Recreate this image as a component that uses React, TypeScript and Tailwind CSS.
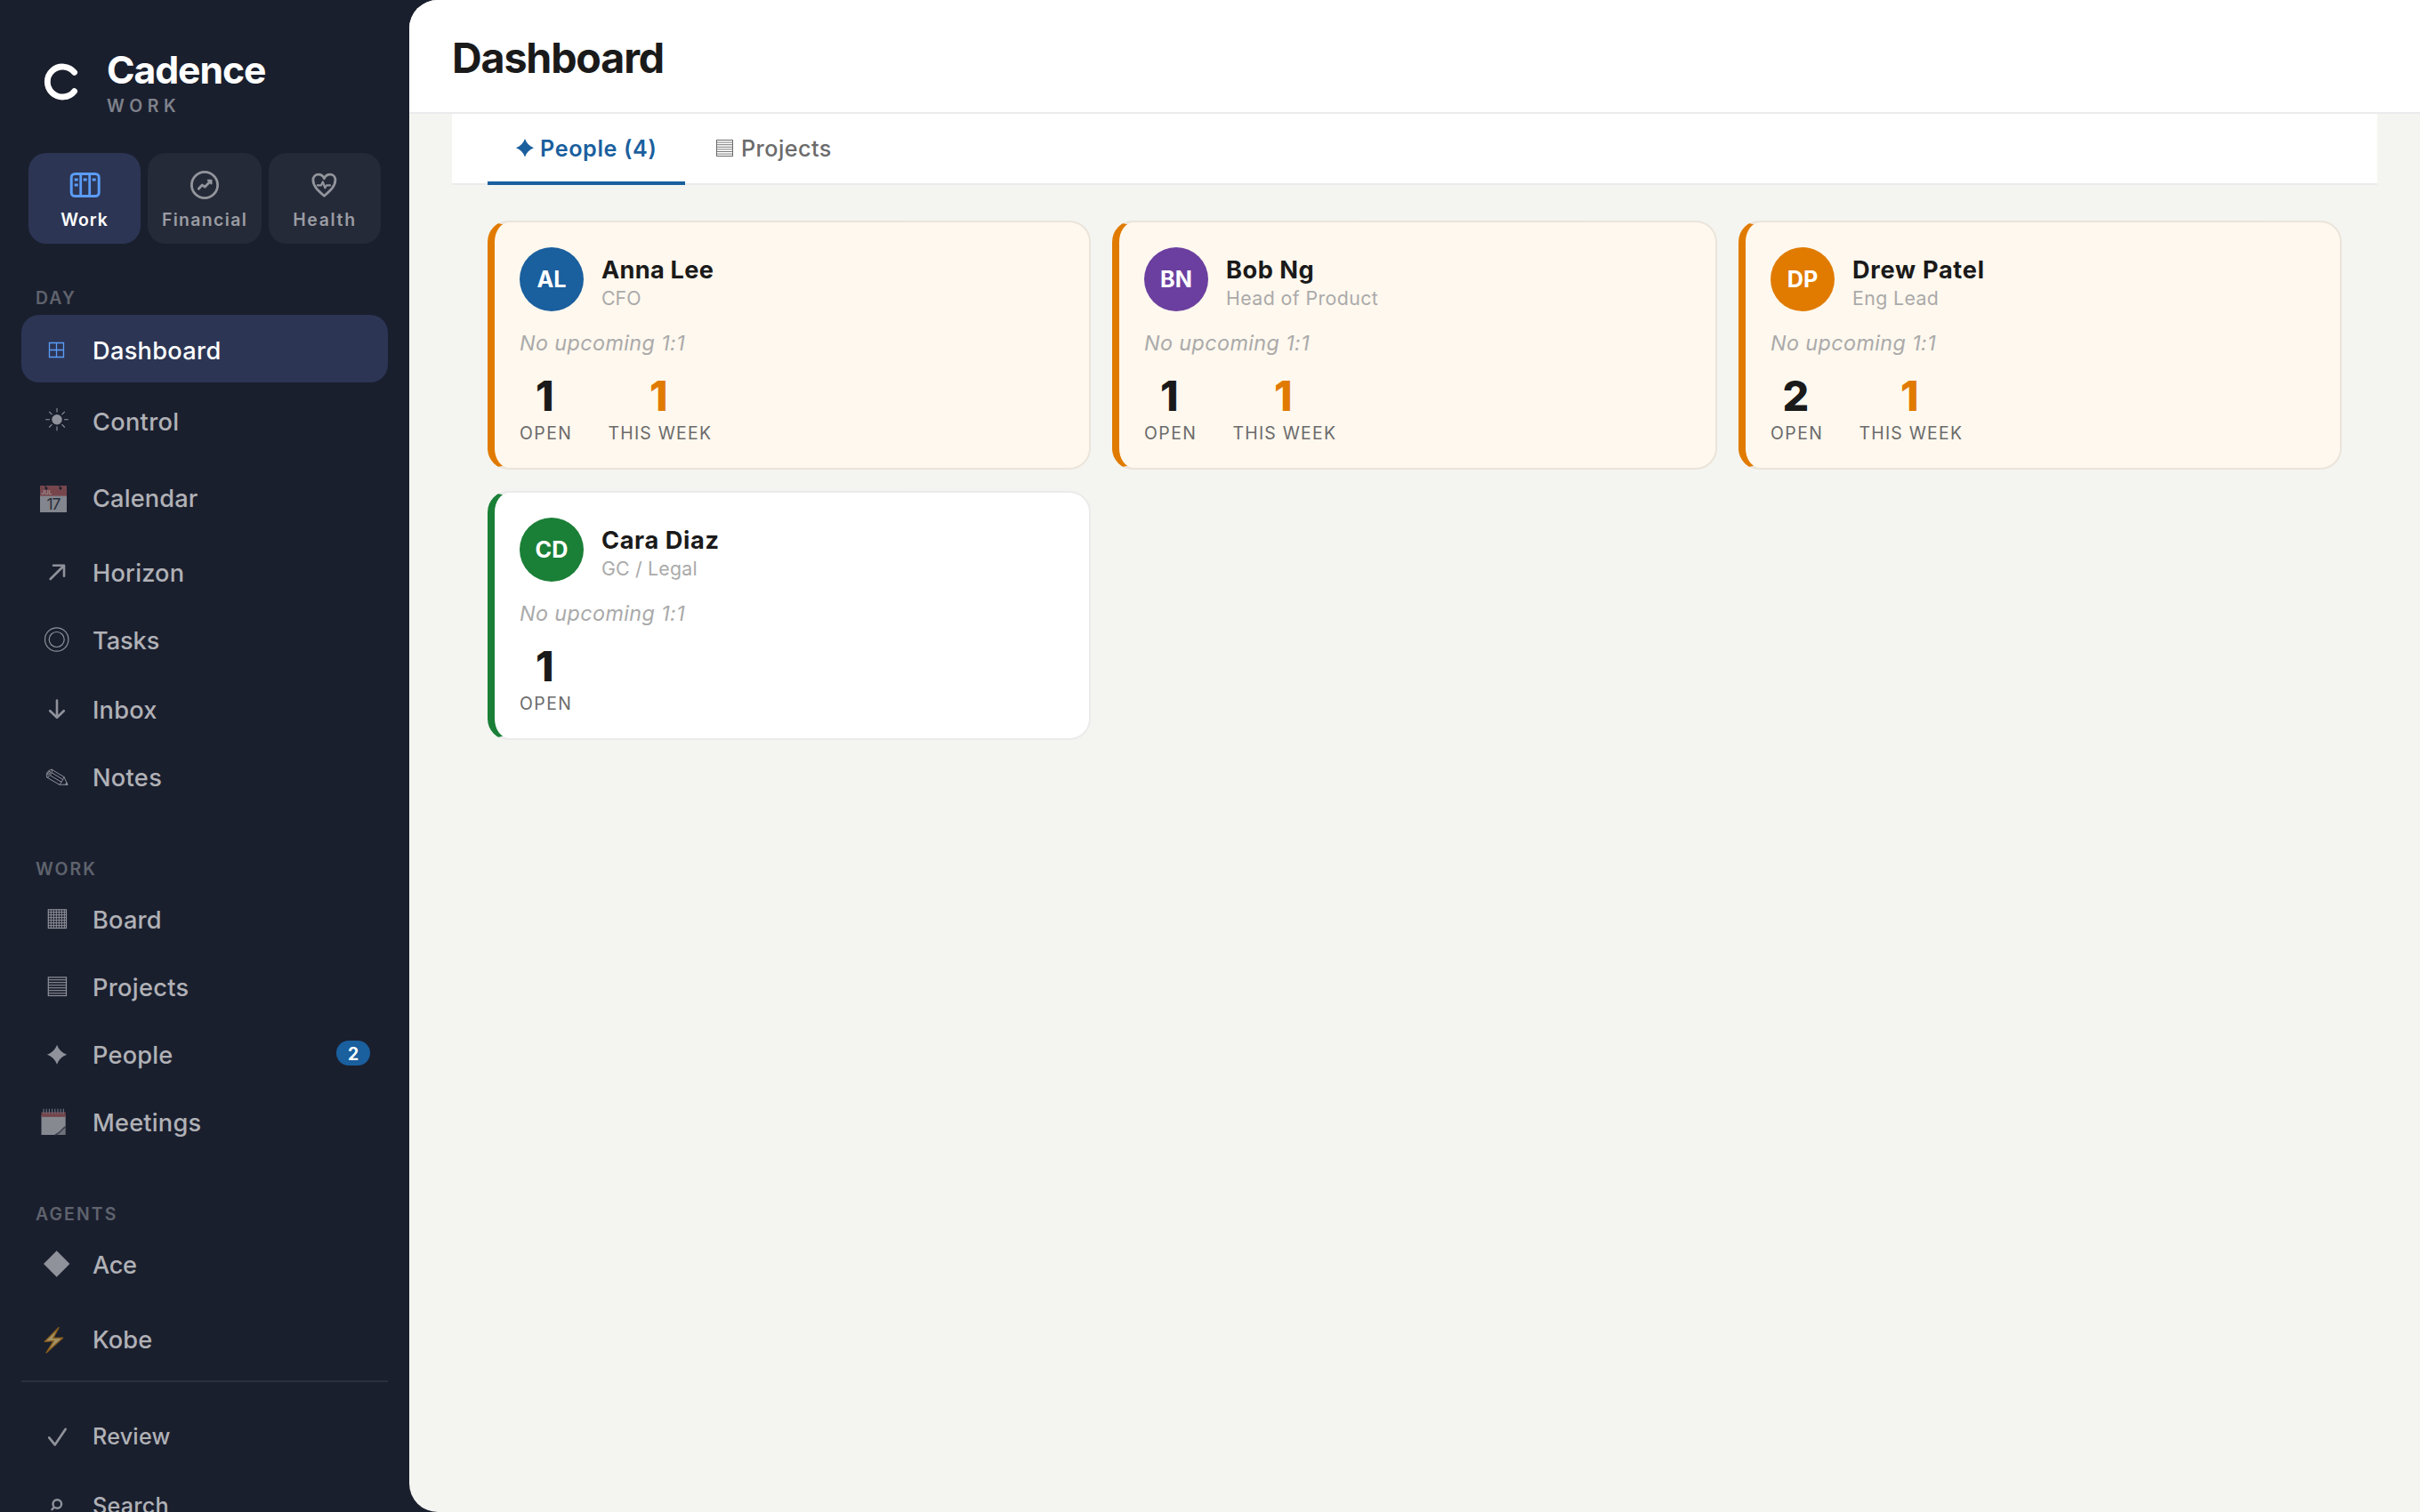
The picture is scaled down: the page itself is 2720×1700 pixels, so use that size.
import type { ReactNode } from "react";

type NavItem = {
  label: string;
  icon: ReactNode;
  row?: string;
  text?: string;
  active?: boolean;
  badge?: number;
};

/* Sidebar glyphs, all on a 48px box */

function Glyph({ children }: { children: ReactNode }) {
  return (
    <svg
      viewBox="0 0 48 48"
      className="size-12 shrink-0"
      fill="none"
      stroke="currentColor"
      strokeLinecap="round"
      strokeLinejoin="round"
    >
      {children}
    </svg>
  );
}

const boardLines = [17.3, 20.3, 23.3, 26.3, 29.3, 32.3];

const dayItems: NavItem[] = [
  {
    label: "Dashboard",
    active: true,
    row: "mt-[2px]",
    icon: (
      <Glyph>
        <path d="M15.5 17.5h16v16h-16zM23.5 17.5v16M15.5 25.5h16" strokeWidth="1.3" strokeLinejoin="miter" />
      </Glyph>
    ),
  },
  {
    label: "Control",
    row: "mt-1",
    icon: (
      <Glyph>
        <circle cx="24" cy="23.7" r="5.7" fill="currentColor" stroke="none" />
        <path
          d="M24 11v4.6M24 31.6v4.6M11.2 23.7h4.8M32 23.7h4.8M15.2 14.8l3.3 3.4M29.5 29.2l3.3 3.3M32.8 14.8l-3.3 3.4M18.5 29.2l-3.3 3.3"
          strokeWidth="1.1"
          strokeLinecap="butt"
        />
      </Glyph>
    ),
  },
  {
    label: "Calendar",
    row: "mt-[10px]",
    text: "tracking-[0.15px]",
    icon: (
      <Glyph>
        <rect x="5" y="12" width="30" height="30" fill="#83868e" stroke="none" />
        <rect x="5" y="12" width="30" height="11.6" fill="#76464c" stroke="none" />
        <circle cx="12" cy="15" r="1.5" fill="#1a1f2e" stroke="none" />
        <circle cx="28" cy="15" r="1.5" fill="#1a1f2e" stroke="none" />
        <path d="M10.5 12.2l1.5 2M26.5 12.2l1.5 2" stroke="#1a1f2e" strokeWidth="1" />
        <text x="6.3" y="22" fontSize="6.4" fontWeight="700" fill="#a08a90" stroke="none">
          JUL
        </text>
        <text x="20" y="39.3" fontSize="17.5" letterSpacing="-1" textAnchor="middle" fill="#2a2e3a" stroke="none">
          17
        </text>
      </Glyph>
    ),
  },
  {
    label: "Horizon",
    row: "mt-2",
    text: "tracking-[0.2px]",
    icon: (
      <Glyph>
        <path d="M16.7 33L31.8 18M20 17.8h12v12" strokeWidth="2.6" />
      </Glyph>
    ),
  },
  {
    label: "Tasks",
    text: "tracking-[-0.1px]",
    icon: (
      <Glyph>
        <circle cx="23.7" cy="25" r="13.2" strokeWidth="1.2" />
        <circle cx="23.7" cy="25" r="8.5" strokeWidth="1.2" />
      </Glyph>
    ),
  },
  {
    label: "Inbox",
    row: "mt-[2px]",
    text: "tracking-[0.2px]",
    icon: (
      <Glyph>
        <path d="M24 15.5V34.5M16.2 27.2l7.8 7.6 7.8-7.6" strokeWidth="2.6" />
      </Glyph>
    ),
  },
  {
    label: "Notes",
    icon: (
      <Glyph>
        <path
          d="M18.3 17.3L32 25.6 36 34.3 26.7 34.2 13 26.2C11.4 23.6 12.4 17.6 18.3 17.3ZM32 25.6C31 28 29.4 31.6 26.7 34.2M18.3 17.3C19.6 20.4 16 25.6 13 26.2M18.6 21L30.6 28.4M17 24.2L28.8 31.2"
          strokeWidth="1"
        />
        <ellipse cx="15" cy="21.2" rx="1" ry="2.2" transform="rotate(30 15 21.2)" strokeWidth="1" />
        <path d="M33.6 33.9l1.3-2.2 1.1 2.4z" fill="currentColor" strokeWidth="0.6" />
      </Glyph>
    ),
  },
];

const workItems: NavItem[] = [
  {
    label: "Board",
    text: "tracking-[0.2px]",
    icon: (
      <Glyph>
        <rect x="14.3" y="14.8" width="20.2" height="20.7" strokeWidth="1.2" strokeLinejoin="miter" />
        {boardLines.map((p) => (
          <path key={p} d={`M14.3 ${p + 0.4}h20.2M${p} 14.8v20.7`} strokeWidth="1" strokeLinecap="butt" />
        ))}
      </Glyph>
    ),
  },
  {
    label: "Projects",
    icon: (
      <Glyph>
        <rect x="14.3" y="14.8" width="20.2" height="20.7" strokeWidth="1.2" strokeLinejoin="miter" />
        {boardLines.map((p) => (
          <path key={p} d={`M14.3 ${p + 0.4}h20.2`} strokeWidth="1.1" strokeLinecap="butt" />
        ))}
      </Glyph>
    ),
  },
  {
    label: "People",
    text: "tracking-[0.2px]",
    badge: 2,
    icon: (
      <Glyph>
        <path
          d="M24 14.7C26 20 29.6 23.7 35.2 25.7 29.6 27.7 26 31.4 24 36.7 22 31.4 18.4 27.7 12.8 25.7 18.4 23.7 22 20 24 14.7Z"
          fill="currentColor"
          stroke="none"
        />
      </Glyph>
    ),
  },
  {
    label: "Meetings",
    text: "tracking-[0.2px]",
    icon: (
      <Glyph>
        <path d="M6.5 18h27.2v12.6L25.5 40H6.5z" fill="#868990" stroke="none" />
        <path d="M33.7 30.6C29 33 27.6 38.6 21.5 40h12.2z" fill="#6e7179" stroke="none" />
        <path d="M33.5 31C29.5 33 28 38 22.5 39.7" stroke="#3b3f4a" strokeWidth="1.5" />
        <rect x="6.5" y="14.4" width="27.2" height="5.4" fill="#74454b" stroke="none" />
        <path
          d="M9 11v5M12.2 11v5M15.4 11v5M18.6 11v5M21.8 11v5M25 11v5M28.2 11v5M31.4 11v5"
          stroke="#6d7480"
          strokeWidth="1.1"
        />
      </Glyph>
    ),
  },
];

const agentItems: NavItem[] = [
  {
    label: "Ace",
    text: "tracking-[-0.4px]",
    icon: (
      <Glyph>
        <path d="M23.7 10.3L38.4 25 23.7 39.7 9 25z" fill="currentColor" stroke="none" />
      </Glyph>
    ),
  },
  {
    label: "Kobe",
    row: "mt-2",
    text: "tracking-[0.1px]",
    icon: (
      <Glyph>
        <path
          d="M26 12.6L10.2 28.4 20.4 27.6 12 41 30.6 24.2 19.8 24.5z"
          fill="#a39163"
          stroke="#8a5d1c"
          strokeWidth="1.3"
        />
      </Glyph>
    ),
  },
];

const footerItems: NavItem[] = [
  {
    label: "Review",
    text: "tracking-[0.2px]",
    icon: (
      <Glyph>
        <path d="M15.2 28.4L21.7 36.4 33.7 18.8" strokeWidth="2.7" />
      </Glyph>
    ),
  },
  {
    label: "Search",
    row: "mt-[2px]",
    text: "tracking-[0.2px]",
    icon: (
      <Glyph>
        <circle cx="24.3" cy="25" r="4.8" strokeWidth="2.4" />
        <path d="M20.6 28.9L18.4 31.3" strokeWidth="2.4" />
      </Glyph>
    ),
  },
];

const people = [
  { initials: "AL", name: "Anna Lee", role: "CFO", open: 1, week: 1, avatar: "bg-[#1a5f9e]", nameCls: "tracking-[0.25px]", roleCls: "tracking-normal" },
  { initials: "BN", name: "Bob Ng", role: "Head of Product", open: 1, week: 1, avatar: "bg-[#6b3fa0]", nameCls: "tracking-[0.5px]", roleCls: "tracking-[0.42px]" },
  { initials: "DP", name: "Drew Patel", role: "Eng Lead", open: 2, week: 1, avatar: "bg-[#e07b00]", nameCls: "tracking-[0.7px]", roleCls: "tracking-[0.38px]" },
  { initials: "CD", name: "Cara Diaz", role: "GC / Legal", open: 1, week: 0, avatar: "bg-[#1a7f37]", nameCls: "tracking-[0.6px]", roleCls: "tracking-[0.2px]" },
];

function NavLabel({ children, className = "" }: { children: ReactNode; className?: string }) {
  return (
    <p className={`pl-10 pb-[5px] text-[19.4px] leading-6 font-semibold tracking-[2.1px] text-[#5f636d] ${className}`}>
      {children}
    </p>
  );
}

function NavRow({ item, small }: { item: NavItem; small?: boolean }) {
  return (
    <div
      className={`mx-6 flex h-[76px] shrink-0 items-center gap-4 rounded-[20px] pr-5 pl-4 ${
        item.active ? "bg-[#2c3554] text-[#5b9cf6]" : "text-[#8f929a]"
      } ${item.row ?? ""}`}
    >
      {item.icon}
      <span
        className={`mt-1.5 flex-1 font-medium ${small ? "text-[25.2px] leading-8" : "text-[27.2px] leading-9"} ${
          item.active ? "text-white" : "text-[#b0b1b6]"
        } ${item.text ?? "tracking-[0.3px]"}`}
      >
        {item.label}
      </span>
      {item.badge && (
        <span className="flex h-7 w-[38px] items-center justify-center rounded-full bg-[#1a5f9e] pt-0.5 text-[19.4px] leading-6 font-bold text-white">
          {item.badge}
        </span>
      )}
    </div>
  );
}

function SpaceTab({ label, active, text, children }: { label: string; active?: boolean; text: string; children: ReactNode }) {
  return (
    <div
      className={`flex h-[102px] flex-col items-center rounded-[20px] pt-4 ${
        active ? "bg-[#2c3554] text-[#5b9cf6]" : "bg-[#252a38] text-[#93959c]"
      }`}
    >
      <svg
        viewBox="0 0 40 40"
        className="size-10"
        fill="none"
        stroke="currentColor"
        strokeWidth="3"
        strokeLinecap="round"
        strokeLinejoin="round"
      >
        {children}
      </svg>
      <span className={`mt-[7px] text-[19.4px] leading-6 font-semibold ${active ? "text-white" : "text-[#9a9ca3]"} ${text}`}>
        {label}
      </span>
    </div>
  );
}

function Sidebar() {
  return (
    <aside className="flex w-[460px] shrink-0 flex-col overflow-hidden bg-[#1a1f2e]">
      {/* Logo */}
      <div className="mt-14 flex h-[76px] shrink-0 gap-4 pl-8">
        <svg viewBox="0 0 72 72" className="size-[72px]" fill="none">
          <path d="M51.6 25.4A17 17 0 1 0 51.6 46.6" stroke="#fff" strokeWidth="6.8" strokeLinecap="round" />
        </svg>
        <div className="pt-px">
          <p className="text-[42.7px] leading-[44px] font-bold tracking-[-1.06px] text-white">Cadence</p>
          <p className="mt-1.5 text-[19.4px] leading-6 font-semibold tracking-[5.7px] text-[#7f828b]">WORK</p>
        </div>
      </div>

      {/* Spaces */}
      <div className="mx-8 mt-10 grid shrink-0 grid-cols-[126px_128px_126px] gap-2">
        <SpaceTab label="Work" active text="tracking-[1px]">
          <rect x="5.2" y="7.5" width="31" height="25" rx="4" />
          <path d="M15.7 7.5v25M25.7 7.5v25" strokeWidth="2.8" strokeLinecap="butt" />
          <path d="M8.7 14h4M18.7 14h4M28.7 14h4M8.7 20h4" strokeLinecap="butt" />
        </SpaceTab>
        <SpaceTab label="Financial" text="tracking-[1.36px]">
          <circle cx="20" cy="20" r="14.6" strokeWidth="2.8" />
          <path d="M13.3 24.3L17.3 20 20.2 22.2 26 16.3" strokeWidth="2.8" />
          <path d="M23.6 14.6h4v4z" fill="currentColor" strokeWidth="1.8" />
        </SpaceTab>
        <SpaceTab label="Health" text="tracking-[1.7px]">
          <path
            d="M19.4 32.3C14 27.5 6.9 22 6.9 14.6 6.9 10.5 9.5 8.2 12.8 8.2 15.8 8.2 18.2 10 19.4 12.8 20.6 10 23 8.2 26 8.2 29.3 8.2 31.9 10.5 31.9 14.6 31.9 22 24.8 27.5 19.4 32.3Z"
            strokeWidth="2.8"
          />
          <path d="M11.8 20.3h4.2l1.8-3.8 2.6 6.8 1.6-3h4" strokeWidth="2.2" />
        </SpaceTab>
      </div>

      <NavLabel className="mt-[49px]">DAY</NavLabel>
      {dayItems.map((item) => (
        <NavRow key={item.label} item={item} />
      ))}

      <NavLabel className="mt-[55px]">WORK</NavLabel>
      {workItems.map((item) => (
        <NavRow key={item.label} item={item} />
      ))}

      <NavLabel className="mt-[55px]">AGENTS</NavLabel>
      {agentItems.map((item) => (
        <NavRow key={item.label} item={item} />
      ))}

      <div className="mx-6 mt-2.5 mb-5 h-0.5 shrink-0 bg-[#2c303e]" />
      {footerItems.map((item) => (
        <NavRow key={item.label} item={item} small />
      ))}
    </aside>
  );
}

function Stat({ value, label, accent }: { value: number; label: string; accent?: boolean }) {
  return (
    <div className="text-center">
      <p
        className={`pr-[3px] text-[46.6px] leading-[48px] font-extrabold ${accent ? "text-[#e07b00]" : "text-[#1a1a1a]"}`}
      >
        {value}
      </p>
      <p className={`mt-1.5 text-[19.4px] leading-6 text-[#6b6b6b] ${accent ? "tracking-[1.25px]" : "tracking-[1.5px]"}`}>
        {label}
      </p>
    </div>
  );
}

function PersonCard({ person }: { person: (typeof people)[number] }) {
  return (
    <div
      className={`h-[280px] rounded-[24px] border-2 border-l-8 border-black/8 p-7 ${
        person.week > 0 ? "border-l-[#e07b00] bg-[#fff8ee]" : "border-l-[#1a7f37] bg-white"
      }`}
    >
      <div className="flex h-[72px] items-center gap-5">
        <div
          className={`flex size-[72px] items-center justify-center rounded-full pt-0.5 text-[25.2px] font-bold text-white ${person.avatar}`}
        >
          {person.initials}
        </div>
        <div className="pt-1.5">
          <p className={`text-[27.2px] leading-[34px] font-bold text-[#1a1a1a] ${person.nameCls}`}>{person.name}</p>
          <p className={`mt-px text-[21.3px] leading-[26px] text-[#aaaaaa] ${person.roleCls}`}>{person.role}</p>
        </div>
      </div>
      <p className="mt-[21px] text-[23.3px] leading-[30px] tracking-[0.42px] text-[#aaaaaa] italic">No upcoming 1:1</p>
      <div className="mt-5 flex gap-10">
        <Stat value={person.open} label="OPEN" />
        {person.week > 0 && <Stat value={person.week} label="THIS WEEK" accent />}
      </div>
    </div>
  );
}

export default function App() {
  return (
    <div className="flex h-[1700px] w-[2720px] overflow-hidden bg-[#1a1f2e] font-['Inter',sans-serif]">
      <Sidebar />

      <main className="flex-1 overflow-hidden rounded-l-[32px] bg-[#f4f5f0]">
        <header className="flex h-32 items-center border-b-2 border-[#ebebeb] bg-white px-12">
          <h1 className="mt-1 text-[46.6px] leading-[56px] font-bold tracking-[-1.16px] text-[#1a1a1a]">Dashboard</h1>
        </header>

        {/* Tabs */}
        <div className="mx-12 flex h-20 border-b-2 border-[#ebebeb] bg-white px-10 text-[25.2px] leading-8">
          <div className="-mb-0.5 flex w-[222px] items-center gap-[7px] border-b-4 border-[#1a5f9e] pl-8 font-semibold tracking-[0.6px] whitespace-nowrap text-[#1a5f9e]">
            <svg viewBox="0 0 20 22" className="h-[22px] w-5 shrink-0" fill="currentColor">
              <path d="M10 1C11.9 6.1 15 9.4 20.2 11.3 15 13.2 11.9 16.5 10 21.6 8.1 16.5 5 13.2 -0.2 11.3 5 9.4 8.1 6.1 10 1Z" />
            </svg>
            <span className="pt-0.5">People (4)</span>
          </div>
          <div className="-mb-0.5 flex items-center gap-[7px] border-b-4 border-transparent px-8 font-medium tracking-[0.45px] text-[#6b6b6b]">
            <svg viewBox="0 0 24 22" className="h-[22px] w-6 shrink-0" fill="none" stroke="currentColor">
              <rect x="3.5" y="2.5" width="18" height="18" strokeWidth="1" />
              <path d="M3.5 5.1h18M3.5 7.7h18M3.5 10.3h18M3.5 12.9h18M3.5 15.5h18M3.5 18.1h18" strokeWidth="0.9" />
            </svg>
            <span className="pt-0.5">Projects</span>
          </div>
        </div>

        {/* People grid */}
        <div className="mx-12 grid grid-cols-[678px_680px_678px] gap-6 p-10">
          {people.map((person) => (
            <PersonCard key={person.initials} person={person} />
          ))}
        </div>
      </main>
    </div>
  );
}
